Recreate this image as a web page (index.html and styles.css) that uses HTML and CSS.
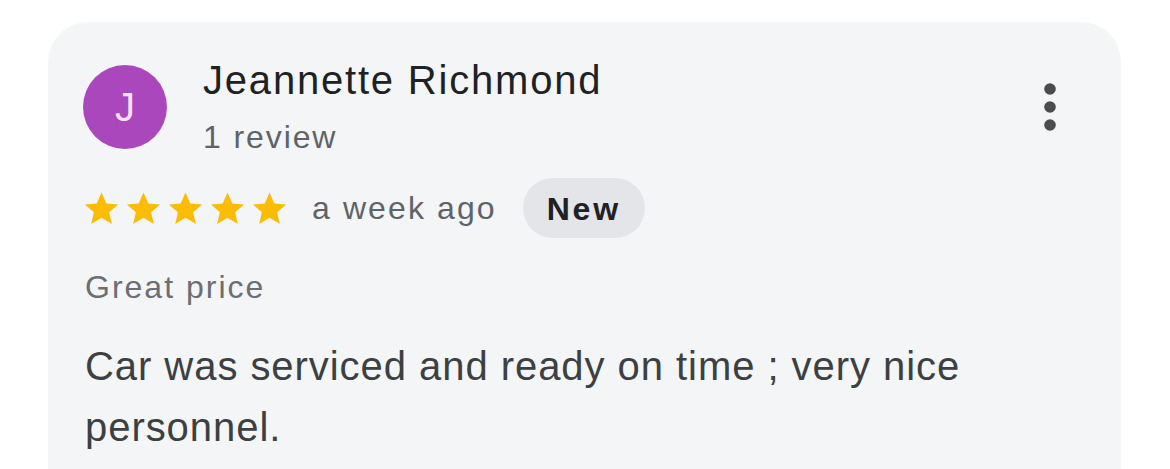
FILE: index.html
```html
<!DOCTYPE html>
<html>
<head>
<meta charset="utf-8">
<link rel="stylesheet" href="styles.css">
</head>
<body>
<div class="card">
  <div class="header">
    <div class="avatar">J</div>
    <div class="who">
      <div class="name">Jeannette Richmond</div>
      <div class="count">1 review</div>
    </div>
    <div class="more">
      <svg width="14" height="48" viewBox="0 0 14 48"><circle cx="7" cy="6" r="5.8" fill="#4a4c50"/><circle cx="7" cy="24" r="5.8" fill="#4a4c50"/><circle cx="7" cy="42" r="5.8" fill="#4a4c50"/></svg>
    </div>
  </div>
  <div class="meta">
    <div class="stars">
      <svg class="star" viewBox="0 0 24 24"><path d="M12 2.2l2.95 6.75 7.3.6-5.55 4.8 1.65 7.15L12 17.7l-6.35 3.8 1.65-7.15-5.55-4.8 7.3-.6z"/></svg>
      <svg class="star" viewBox="0 0 24 24"><path d="M12 2.2l2.95 6.75 7.3.6-5.55 4.8 1.65 7.15L12 17.7l-6.35 3.8 1.65-7.15-5.55-4.8 7.3-.6z"/></svg>
      <svg class="star" viewBox="0 0 24 24"><path d="M12 2.2l2.95 6.75 7.3.6-5.55 4.8 1.65 7.15L12 17.7l-6.35 3.8 1.65-7.15-5.55-4.8 7.3-.6z"/></svg>
      <svg class="star" viewBox="0 0 24 24"><path d="M12 2.2l2.95 6.75 7.3.6-5.55 4.8 1.65 7.15L12 17.7l-6.35 3.8 1.65-7.15-5.55-4.8 7.3-.6z"/></svg>
      <svg class="star" viewBox="0 0 24 24"><path d="M12 2.2l2.95 6.75 7.3.6-5.55 4.8 1.65 7.15L12 17.7l-6.35 3.8 1.65-7.15-5.55-4.8 7.3-.6z"/></svg>
    </div>
    <span class="when">a week ago</span>
    <span class="chip">New</span>
  </div>
  <div class="title">Great price</div>
  <p class="body">Car was serviced and ready on time ; very nice personnel.</p>
</div>
</body>
</html>
```
FILE: styles.css
```css
html, body {
  margin: 0;
  padding: 0;
  background: #ffffff;
  font-family: "Liberation Sans", Arial, sans-serif;
}
body {
  padding: 22px 49px 0 48px;
  height: 469px;
  box-sizing: border-box;
  overflow: hidden;
}
.card {
  background: #f4f5f7;
  border-radius: 40px 40px 0 0;
  padding: 43px 0 0 35px;
  height: 600px;
  box-sizing: border-box;
}
.header {
  display: flex;
  align-items: flex-start;
}
.avatar {
  width: 84px;
  height: 84px;
  border-radius: 50%;
  background: #aa47bc;
  color: #f6e2f6;
  font-size: 40px;
  display: flex;
  align-items: center;
  justify-content: center;
  flex: none;
}
.who {
  margin-left: 36px;
  margin-top: -9px;
  flex: 1;
}
.name {
  font-size: 40px;
  color: #202124;
  line-height: 48px;
  letter-spacing: 1.8px;
}
.count {
  font-size: 32px;
  color: #5f6368;
  line-height: 40px;
  margin-top: 13px;
  letter-spacing: 1.9px;
}
.more {
  margin-top: 18px;
  margin-right: 64px;
}
.meta {
  display: flex;
  align-items: center;
  margin-top: 21px;
  margin-left: -1px;
}
.stars {
  display: flex;
  gap: 3px;
}
.star {
  width: 39px;
  height: 39px;
  fill: #fbbc04;
}
.when {
  font-size: 32px;
  line-height: 40px;
  color: #5f6368;
  margin-left: 23px;
  letter-spacing: 2.1px;
}
.chip {
  margin-left: 26px;
  background: #e3e5e8;
  color: #202124;
  font-size: 32px;
  font-weight: 700;
  height: 60px;
  line-height: 62px;
  padding: 0 24px 0 24px;
  border-radius: 30px;
  letter-spacing: 2.8px;
}
.title {
  margin-top: 29px;
  margin-left: 2px;
  font-size: 32px;
  color: #6b6e72;
  line-height: 40px;
  letter-spacing: 2px;
}
.body {
  margin: 29px 0 0 2px;
  font-size: 40px;
  line-height: 61px;
  color: #3c4043;
  width: 950px;
  letter-spacing: 0.95px;
}
```
